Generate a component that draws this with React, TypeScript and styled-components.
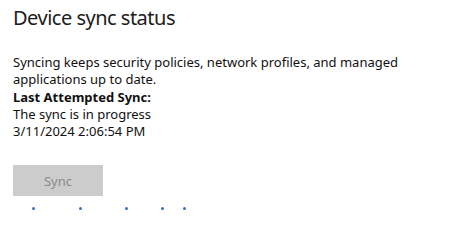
import { createGlobalStyle, styled } from 'styled-components';

const GlobalStyle = createGlobalStyle`
  html, body {
    margin: 0;
    padding: 0;
    background: #ffffff;
  }
  body {
    font-family: 'Noto Sans', 'Open Sans', sans-serif;
    color: #111111;
  }
`;

const dots = [33, 80, 126, 162, 184];

export default function App() {
  return (
    <>
      <GlobalStyle />
      <S.Page>
        <S.Title>Device sync status</S.Title>
        <S.Body>
          <S.Line>
            Syncing keeps security policies, network profiles, and managed
            applications up to date.
          </S.Line>
          <S.Label>Last Attempted Sync:</S.Label>
          <S.Line>The sync is in progress</S.Line>
          <S.Line>3/11/2024 2:06:54 PM</S.Line>
        </S.Body>
        <S.SyncButton disabled>Sync</S.SyncButton>
        <S.Progress>
          {dots.map(x => (
            <S.Dot key={x} style={{ left: x - 1 }} />
          ))}
        </S.Progress>
      </S.Page>
    </>
  );
}

const S = {
  Page: styled.div`
    width: 474px;
    height: 243px;
    padding: 4px 0 0 13px;
    box-sizing: border-box;
    display: flex;
    flex-direction: column;
  `,
  Title: styled.h1`
    margin: 0;
    font-size: 20px;
    font-weight: 400;
    letter-spacing: -0.5px;
    line-height: 28px;
    color: #1b1b1b;
  `,
  Body: styled.div`
    margin-top: 22px;
    width: 410px;
    font-size: 13px;
    line-height: 17.3px;
  `,
  Line: styled.div``,
  Label: styled.div`
    font-weight: 700;
  `,
  SyncButton: styled.button`
    margin-top: 25px;
    width: 90px;
    height: 31px;
    border: none;
    border-radius: 0;
    background: #cccccc;
    color: #8a8a8a;
    font-family: inherit;
    font-size: 13px;
    padding: 0;
  `,
  Progress: styled.div`
    position: relative;
    height: 12px;
    margin-left: -13px;
    margin-top: 6px;
  `,
  Dot: styled.span`
    position: absolute;
    top: 5px;
    width: 3px;
    height: 3px;
    border-radius: 50%;
    background: #3b6cc4;
  `,
};
